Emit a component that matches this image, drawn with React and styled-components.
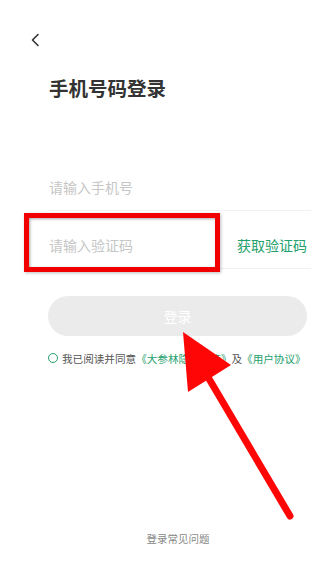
import React from "react";
import styled, { createGlobalStyle } from "styled-components";

const GlobalStyle = createGlobalStyle`
    html, body {
        margin: 0;
        padding: 0;
        background: #fff;
    }
    body {
        font-family: "Noto Sans CJK SC", "Noto Sans", sans-serif;
    }
`;

const green = "#25a06c";

export default function App() {
    return (
        <>
            <GlobalStyle />
            <Page>
                <Back>
                    <svg width="10" height="14" viewBox="0 0 10 14">
                        <path d="M8 1.5 L2.5 7 L8 12.5" fill="none" stroke="#333" strokeWidth="1.6" strokeLinecap="round" strokeLinejoin="round" />
                    </svg>
                </Back>
                <Title>手机号码登录</Title>

                <Field>
                    <Placeholder>请输入手机号</Placeholder>
                </Field>
                <Field tall>
                    <Placeholder>请输入验证码</Placeholder>
                    <GetCode>获取验证码</GetCode>
                    <Highlight />
                </Field>

                <LoginButton>登录</LoginButton>

                <Agreement>
                    <Circle />
                    <span>我已阅读并同意</span>
                    <Link>《大参林隐私政策》</Link>
                    <span>及</span>
                    <Link>《用户协议》</Link>
                </Agreement>

                <Footer>登录常见问题</Footer>

                <Arrow width="311" height="576" viewBox="0 0 311 576">
                    <line x1="205" y1="372" x2="290" y2="516" stroke="#ff0606" strokeWidth="7" strokeLinecap="round" />
                    <polygon points="183,332 231,365 188,392" fill="#ff0606" />
                </Arrow>
            </Page>
        </>
    );
}

const Page = styled.div`
    width: 311px;
    height: 576px;
    position: relative;
    display: flex;
    flex-direction: column;
    background: #fff;
    overflow: hidden;
`;

const Back = styled.div`
    margin: 33px 0 0 30px;
    width: 10px;
    height: 14px;
    display: flex;
`;

const Title = styled.h1`
    margin: 31px 0 0 49px;
    font-size: 19.5px;
    line-height: 20px;
    font-weight: 700;
    color: #333;
`;

const Field = styled.div`
    position: relative;
    margin: ${p => (p.tall ? "0" : "65px")} 0 0 49px;
    height: ${p => (p.tall ? "58px" : "48px")};
    padding-top: ${p => (p.tall ? "10px" : "0")};
    padding-right: 4px;
    box-sizing: border-box;
    display: flex;
    align-items: center;
    justify-content: space-between;
    border-bottom: 1px solid #f1f1f1;
`;

const Placeholder = styled.span`
    font-size: 14px;
    color: #c6c6c6;
`;

const GetCode = styled.span`
    font-size: 14px;
    color: ${green};
`;

const Highlight = styled.div`
    position: absolute;
    left: -25px;
    top: 2px;
    width: 196px;
    height: 59px;
    box-sizing: border-box;
    border: 5px solid #f20000;
    box-shadow: inset 1px 1px 3px rgba(0, 0, 0, 0.35), 1px 1px 3px rgba(0, 0, 0, 0.25);
`;

const LoginButton = styled.div`
    margin: 27px 0 0 48px;
    width: 259px;
    height: 40px;
    border-radius: 20px;
    background: #ebebeb;
    color: #fff;
    font-size: 14px;
    display: flex;
    align-items: center;
    justify-content: center;
`;

const Agreement = styled.div`
    margin: 16px 0 0 48px;
    height: 12px;
    display: flex;
    align-items: center;
    font-size: 10.6px;
    color: #555;
    white-space: nowrap;
`;

const Circle = styled.span`
    width: 8px;
    height: 8px;
    border: 1.5px solid ${green};
    border-radius: 50%;
    margin-right: 4px;
    flex-shrink: 0;
`;

const Link = styled.span`
    color: ${green};
`;

const Footer = styled.div`
    margin-top: auto;
    padding: 0 0 30px 45px;
    text-align: center;
    font-size: 10.5px;
    color: #888;
`;

const Arrow = styled.svg`
    position: absolute;
    left: 0;
    top: 0;
    pointer-events: none;
`;
